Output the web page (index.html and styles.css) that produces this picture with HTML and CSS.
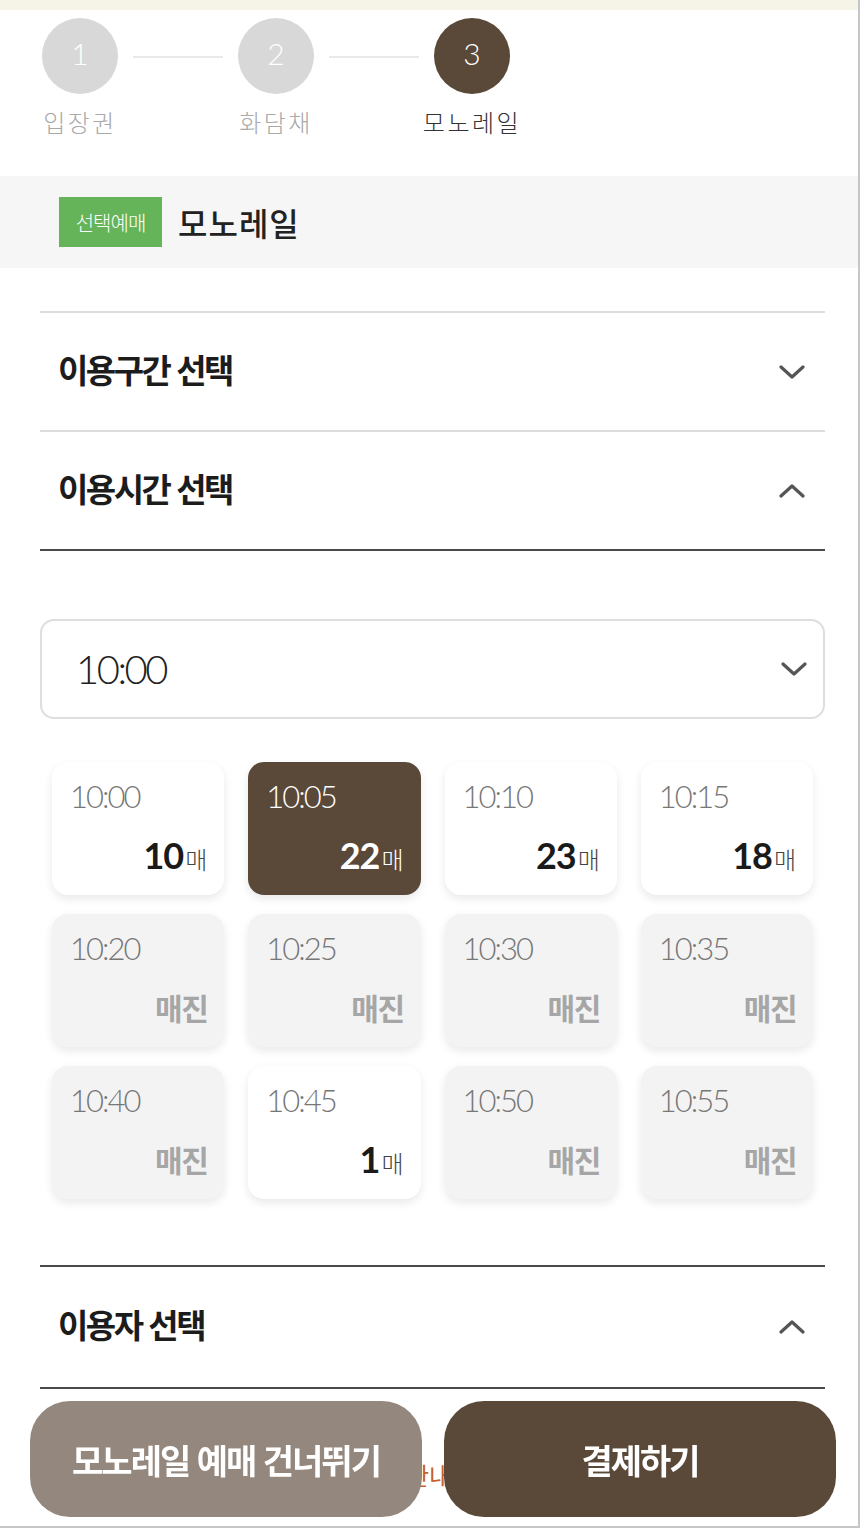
FILE: index.html
```html
<!DOCTYPE html>
<html lang="ko">
<head>
    <meta charset="UTF-8">
    <meta name="viewport" content="width=device-width, initial-scale=1.0">
    <title>모노레일 예매</title>
    <link rel="stylesheet" href="styles.css">
</head>
<body>
    <div class="page">
        <div class="top-strip"></div>

        <div class="stepper">
            <div class="step">
                <div class="step-circle">1</div>
                <div class="step-label">입장권</div>
            </div>
            <div class="step-line"></div>
            <div class="step">
                <div class="step-circle">2</div>
                <div class="step-label">화담채</div>
            </div>
            <div class="step-line"></div>
            <div class="step active">
                <div class="step-circle">3</div>
                <div class="step-label">모노레일</div>
            </div>
        </div>

        <div class="section-band">
            <span class="badge">선택예매</span>
            <h2 class="band-title">모노레일</h2>
        </div>

        <div class="accordion">
            <div class="acc-item">
                <div class="acc-head">
                    <span>이용구간 선택</span>
                    <svg class="chev" width="26" height="16" viewBox="0 0 26 16"><path d="M2 3 L13 13 L24 3" fill="none" stroke="#555" stroke-width="3.2" stroke-linecap="round" stroke-linejoin="round"/></svg>
                </div>
            </div>

            <div class="acc-item open">
                <div class="acc-head">
                    <span>이용시간 선택</span>
                    <svg class="chev" width="26" height="16" viewBox="0 0 26 16"><path d="M2 13 L13 3 L24 13" fill="none" stroke="#555" stroke-width="3.2" stroke-linecap="round" stroke-linejoin="round"/></svg>
                </div>
                <div class="acc-body">
                    <div class="time-select">
                        <span>10:00</span>
                        <svg width="26" height="16" viewBox="0 0 26 16"><path d="M2 3 L13 13 L24 3" fill="none" stroke="#555" stroke-width="3.2" stroke-linecap="round" stroke-linejoin="round"/></svg>
                    </div>

                    <div class="slot-grid">
                        <div class="slot">
                            <div class="slot-time">10:00</div>
                            <div class="slot-count"><b>10</b>매</div>
                        </div>
                        <div class="slot selected">
                            <div class="slot-time">10:05</div>
                            <div class="slot-count"><b>22</b>매</div>
                        </div>
                        <div class="slot">
                            <div class="slot-time">10:10</div>
                            <div class="slot-count"><b>23</b>매</div>
                        </div>
                        <div class="slot">
                            <div class="slot-time">10:15</div>
                            <div class="slot-count"><b>18</b>매</div>
                        </div>
                        <div class="slot soldout">
                            <div class="slot-time">10:20</div>
                            <div class="slot-count">매진</div>
                        </div>
                        <div class="slot soldout">
                            <div class="slot-time">10:25</div>
                            <div class="slot-count">매진</div>
                        </div>
                        <div class="slot soldout">
                            <div class="slot-time">10:30</div>
                            <div class="slot-count">매진</div>
                        </div>
                        <div class="slot soldout">
                            <div class="slot-time">10:35</div>
                            <div class="slot-count">매진</div>
                        </div>
                        <div class="slot soldout">
                            <div class="slot-time">10:40</div>
                            <div class="slot-count">매진</div>
                        </div>
                        <div class="slot">
                            <div class="slot-time">10:45</div>
                            <div class="slot-count"><b>1</b>매</div>
                        </div>
                        <div class="slot soldout">
                            <div class="slot-time">10:50</div>
                            <div class="slot-count">매진</div>
                        </div>
                        <div class="slot soldout">
                            <div class="slot-time">10:55</div>
                            <div class="slot-count">매진</div>
                        </div>
                    </div>
                </div>
            </div>

            <div class="acc-item open last">
                <div class="acc-head">
                    <span>이용자 선택</span>
                    <svg class="chev" width="26" height="16" viewBox="0 0 26 16"><path d="M2 13 L13 3 L24 13" fill="none" stroke="#555" stroke-width="3.2" stroke-linecap="round" stroke-linejoin="round"/></svg>
                </div>
            </div>
        </div>

        <p class="notice">안내</p>
    </div>

    <div class="bottom-bar">
        <button class="btn btn-skip">모노레일 예매 건너뛰기</button>
        <button class="btn btn-pay">결제하기</button>
    </div>
</body>
</html>
```

FILE: styles.css
```css
* {
    box-sizing: border-box;
}

body {
    margin: 0;
    font-family: "Noto Sans CJK KR", "Noto Sans", sans-serif;
    background: white;
    color: #222;
}

.page {
    min-height: 1528px;
    border-right: 2px solid #c6c6c6;
    border-bottom: 2px solid #c6c6c6;
}

.top-strip {
    height: 10px;
    background: #f6f4e7;
}

/* stepper */
.stepper {
    display: grid;
    grid-template-columns: 100px 96px 100px 96px 100px;
    padding: 8px 0 0 30px;
    height: 166px;
}

.step {
    display: flex;
    flex-direction: column;
    align-items: center;
}

.step-circle {
    width: 76px;
    height: 76px;
    border-radius: 50%;
    background: #d8d8d8;
    color: white;
    display: flex;
    align-items: center;
    justify-content: center;
    padding-bottom: 6px;
    font-family: "Lato", sans-serif;
    font-weight: 300;
    font-size: 30px;
}

.step-label {
    margin-top: 10px;
    font-size: 24px;
    font-weight: 300;
    color: #a9a9a9;
    letter-spacing: 2.5px;
}

.step.active .step-circle {
    background: #5a4838;
}

.step.active .step-label {
    color: #333;
}

.step-line {
    height: 2px;
    background: #e9e9e9;
    margin: 38px 3px 0;
}

/* section band */
.section-band {
    display: flex;
    align-items: center;
    gap: 16px;
    height: 92px;
    padding-left: 59px;
    background: #f6f6f6;
}

.badge {
    background: #65b45a;
    color: white;
    font-size: 20px;
    font-weight: 300;
    width: 103px;
    height: 50px;
    display: flex;
    align-items: center;
    justify-content: center;
    letter-spacing: -1px;
}

.band-title {
    margin: 0;
    font-size: 32px;
    font-weight: 500;
    color: #222;
    letter-spacing: 1px;
}

/* accordion */
.accordion {
    margin: 43px 33px 0 40px;
}

.acc-item {
    border-top: 2px solid #dddddd;
}

.acc-head {
    height: 117px;
    display: flex;
    align-items: center;
    justify-content: space-between;
    padding: 0 20px 6px 18px;
    font-size: 33px;
    font-weight: 700;
    letter-spacing: -2.5px;
    color: #1c1c1c;
}

.acc-head .chev {
    margin-top: 6px;
}

.acc-item.open .acc-head {
    height: 119px;
    border-bottom: 2px solid #4a4a4a;
}

.acc-item.last {
    border-top: 2px solid #4a4a4a;
}

.acc-item.last .acc-head {
    height: 122px;
}

.acc-body {
    padding: 68px 0 66px;
}

.time-select {
    height: 100px;
    border: 2px solid #dedede;
    border-radius: 14px;
    display: flex;
    align-items: center;
    justify-content: space-between;
    padding: 0 16px 0 34px;
    font-family: "Lato", sans-serif;
    font-weight: 300;
    font-size: 40px;
    letter-spacing: -2.5px;
    color: #222;
}

.slot-grid {
    display: grid;
    grid-template-columns: repeat(4, 1fr);
    gap: 19px 24px;
    margin-top: 43px;
    padding: 0 12px;
}

.slot {
    height: 133px;
    border-radius: 16px;
    background: white;
    box-shadow: 0 4px 10px rgba(0, 0, 0, 0.09);
    padding: 15px 17px 18px 18px;
    display: flex;
    flex-direction: column;
    justify-content: space-between;
}

.slot-time {
    font-family: "Lato", sans-serif;
    font-weight: 300;
    font-size: 31px;
    letter-spacing: -2px;
    color: #777;
}

.slot-count {
    align-self: flex-end;
    font-size: 24px;
    font-weight: 300;
    color: #444;
}

.slot-count b {
    font-family: "Lato", sans-serif;
    font-weight: 700;
    font-size: 36px;
    letter-spacing: -1px;
    color: #1a1a1a;
    margin-right: 2px;
}

.slot.selected {
    background: #5a4838;
}

.slot.selected .slot-time,
.slot.selected .slot-count,
.slot.selected .slot-count b {
    color: white;
}

.slot.soldout {
    background: #f3f3f3;
}

.slot.soldout .slot-count {
    font-size: 30px;
    font-weight: 700;
    letter-spacing: -1.5px;
    color: #a6a6a6;
}

.notice {
    margin: 68px 0 0;
    text-align: center;
    font-size: 24px;
    color: #c8602a;
}

/* bottom buttons */
.bottom-bar {
    position: fixed;
    left: 30px;
    right: 24px;
    bottom: 11px;
    display: flex;
    gap: 22px;
}

.btn {
    flex: 1;
    height: 116px;
    border: none;
    border-radius: 40px;
    color: white;
    font-family: "Noto Sans CJK KR", sans-serif;
    font-size: 34px;
    font-weight: 700;
    letter-spacing: -2px;
}

.btn-skip {
    background: #94877d;
}

.btn-pay {
    background: #5a4838;
}
```
